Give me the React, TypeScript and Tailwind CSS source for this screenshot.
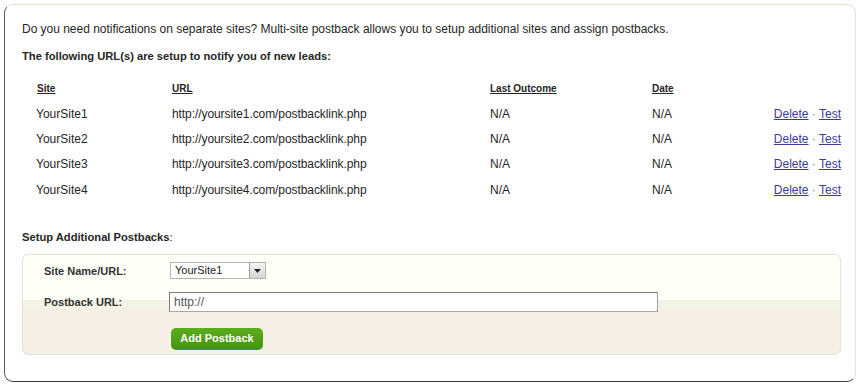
const rows = [
  { site: "YourSite1", url: "http://yoursite1.com/postbacklink.php" },
  { site: "YourSite2", url: "http://yoursite2.com/postbacklink.php" },
  { site: "YourSite3", url: "http://yoursite3.com/postbacklink.php" },
  { site: "YourSite4", url: "http://yoursite4.com/postbacklink.php" },
];

const App = () => {
  return (
    <div className="w-[860px] h-[386px] bg-white pt-[4px] pl-[4px] font-['Liberation_Sans',Arial,sans-serif] text-[#262626]">
      <div className="w-[852px] h-[378px] rounded-[9px] border border-t-[#d3ecc3] border-r-[#e2e2e2] border-l-[#5a5a5a] border-b-[#3c3c3c] pl-[17px] pr-[14px] pt-[17px]">
        <p className="text-[12px] leading-[14px] tracking-[-0.02px]">
          Do you need notifications on separate sites? Multi-site postback allows you to setup additional sites and assign postbacks.
        </p>
        <p className="mt-[13px] text-[11.2px] leading-[14px] font-bold">
          The following URL(s) are setup to notify you of new leads:
        </p>

        <div className="mt-[20px] grid grid-cols-[150px_318px_162px_1fr] text-[10px] leading-[12px] font-bold underline">
          <span className="pl-[15px]">Site</span>
          <span>URL</span>
          <span>Last Outcome</span>
          <span>Date</span>
        </div>
        <div className="mt-[6px]">
          {rows.map((r) => (
            <div
              key={r.site}
              className="grid grid-cols-[150px_318px_162px_1fr] h-[25.33px] items-center text-[12px] leading-[14px]"
            >
              <span className="pl-[14px]">{r.site}</span>
              <span className="tracking-[-0.08px]">{r.url}</span>
              <span>N/A</span>
              <span className="flex justify-between">
                <span>N/A</span>
                <span className="text-[#3b3b96]">
                  <a href="#" className="underline">Delete</a>
                  <span className="text-[#888]"> · </span>
                  <a href="#" className="underline">Test</a>
                </span>
              </span>
            </div>
          ))}
        </div>

        <p className="mt-[28px] text-[11.2px] leading-[14px]">
          <span className="font-bold">Setup Additional Postbacks</span>:
        </p>

        <div className="mt-[10px] h-[101px] rounded-[6px] border border-[#e6e2d6] bg-[linear-gradient(to_bottom,#fffff7_0px,#fffff7_45px,#f3f3e5_45px,#f3f3e5_54px,#f5efe5_54px)] pl-[21px] pt-[7px]">
          <div className="flex items-center h-[17px]">
            <span className="w-[126px] text-[11px] font-bold text-[#333]">Site Name/URL:</span>
            <div className="flex h-[17px] w-[96px] items-center border border-[#b4b4b4] bg-white">
              <span className="flex-1 pl-[4px] text-[11px] leading-[15px] text-[#222]">YourSite1</span>
              <span className="flex h-[15px] w-[16px] items-center justify-center border-l border-[#9a9a9a] bg-[linear-gradient(to_bottom,#f4f4f4,#d6d6d6)]">
                <svg width="7" height="4" viewBox="0 0 7 4">
                  <path d="M0 0H7L3.5 4Z" fill="#222" />
                </svg>
              </span>
            </div>
          </div>
          <div className="mt-[13px] flex items-center h-[20px]">
            <span className="w-[125px] text-[11px] font-bold text-[#333]">Postback URL:</span>
            <div className="flex h-[20px] w-[489px] items-center border border-[#7b7b7b] border-r-[#9a9a9a] border-b-[#a8a8a8] bg-white pl-[4px] text-[12px] text-[#555]">
              http://
            </div>
          </div>
          <div className="mt-[13px] pl-[127px]">
            <button className="h-[22px] w-[92px] rounded-[5px] bg-[linear-gradient(to_bottom,#5cae1d,#43930c)] text-[11px] font-bold text-white">
              Add Postback
            </button>
          </div>
        </div>
      </div>
    </div>
  );
};

export default App;
